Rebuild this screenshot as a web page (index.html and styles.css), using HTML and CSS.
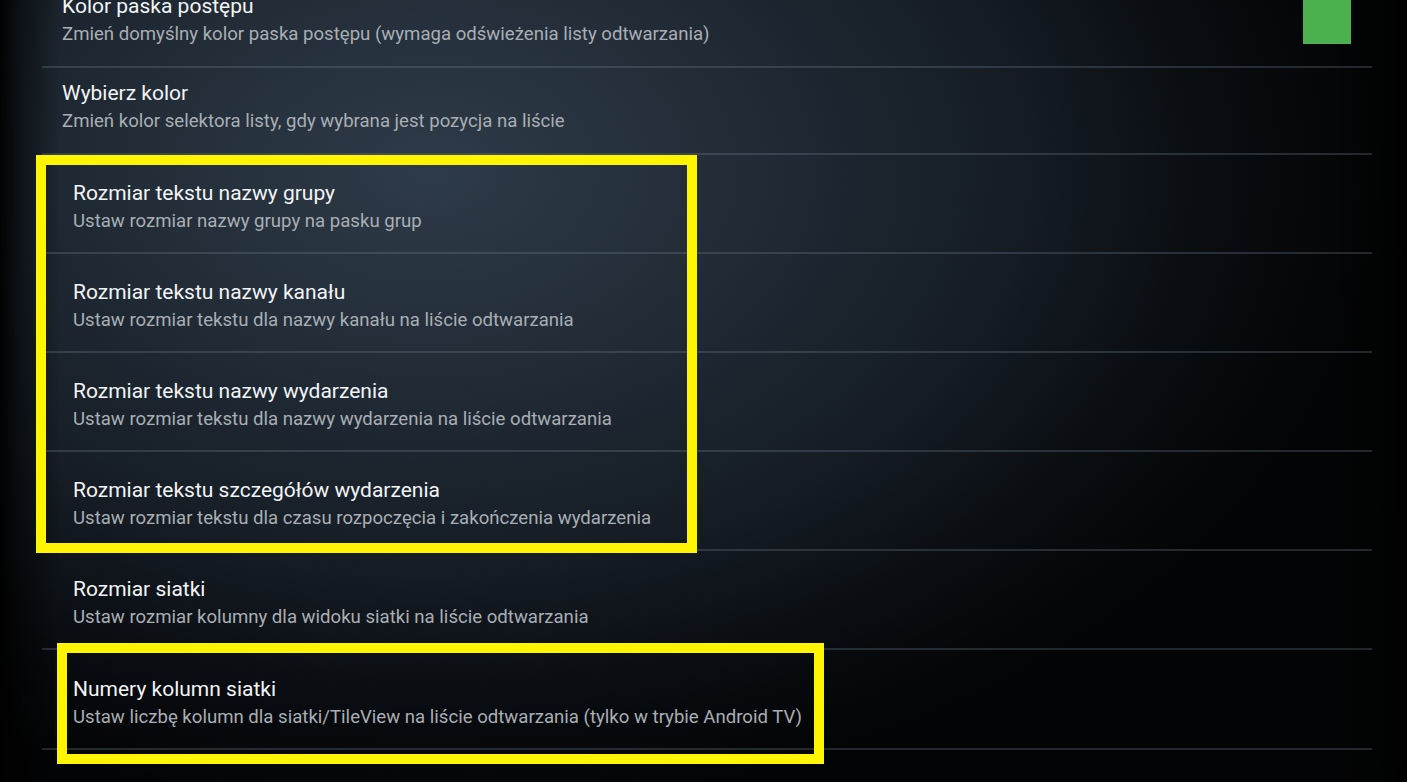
FILE: index.html
```html
<!DOCTYPE html>
<html lang="pl">
<head>
<meta charset="utf-8">
<title>Ustawienia</title>
<link rel="stylesheet" href="styles.css">
</head>
<body>
<div class="screen">
  <div class="list">
    <div class="row row-compact">
      <div class="texts">
        <div class="title">Kolor paska postępu</div>
        <div class="summary">Zmień domyślny kolor paska postępu (wymaga odświeżenia listy odtwarzania)</div>
      </div>
      <div class="swatch"></div>
    </div>
    <div class="row row-compact">
      <div class="texts">
        <div class="title">Wybierz kolor</div>
        <div class="summary">Zmień kolor selektora listy, gdy wybrana jest pozycja na liście</div>
      </div>
    </div>
    <div class="group group-highlight">
      <div class="row">
        <div class="texts">
          <div class="title">Rozmiar tekstu nazwy grupy</div>
          <div class="summary">Ustaw rozmiar nazwy grupy na pasku grup</div>
        </div>
      </div>
      <div class="row">
        <div class="texts">
          <div class="title">Rozmiar tekstu nazwy kanału</div>
          <div class="summary">Ustaw rozmiar tekstu dla nazwy kanału na liście odtwarzania</div>
        </div>
      </div>
      <div class="row">
        <div class="texts">
          <div class="title">Rozmiar tekstu nazwy wydarzenia</div>
          <div class="summary">Ustaw rozmiar tekstu dla nazwy wydarzenia na liście odtwarzania</div>
        </div>
      </div>
      <div class="row">
        <div class="texts">
          <div class="title">Rozmiar tekstu szczegółów wydarzenia</div>
          <div class="summary">Ustaw rozmiar tekstu dla czasu rozpoczęcia i zakończenia wydarzenia</div>
        </div>
      </div>
    </div>
    <div class="row">
      <div class="texts">
        <div class="title">Rozmiar siatki</div>
        <div class="summary">Ustaw rozmiar kolumny dla widoku siatki na liście odtwarzania</div>
      </div>
    </div>
    <div class="row row-highlight">
      <div class="texts">
        <div class="title">Numery kolumn siatki</div>
        <div class="summary">Ustaw liczbę kolumn dla siatki/TileView na liście odtwarzania (tylko w trybie Android TV)</div>
      </div>
    </div>
  </div>
</div>
</body>
</html>
```

FILE: styles.css
```css
html, body {
  margin: 0;
  padding: 0;
  height: 100%;
  overflow: hidden;
}

body {
  font-family: Roboto, "Noto Sans", "Liberation Sans", sans-serif;
  background: #05080b;
}

.screen {
  width: 1407px;
  height: 782px;
  overflow: hidden;
  background:
    linear-gradient(to right, rgba(0,0,0,0.95) 0px, rgba(0,0,0,0.55) 18px, rgba(0,0,0,0) 60px),
    linear-gradient(to left, rgba(0,0,0,0.9) 0px, rgba(0,0,0,0.4) 25px, rgba(0,0,0,0) 80px),
    radial-gradient(ellipse 950px 640px at 430px 170px, #2e3b48 0%, #222d38 30%, #151c24 62%, #080b0f 85%, #030405 100%);
}

.list {
  margin: -19px 0 0 42px;
  width: 1330px;
  display: flex;
  flex-direction: column;
}

.row {
  display: flex;
  align-items: center;
  padding: 24px 21px 17px 31px;
  border-bottom: 2px solid rgba(120, 135, 150, 0.28);
}

.row-compact {
  padding: 11px 21px 18px 20px;
}

.texts {
  flex: 1;
  display: flex;
  flex-direction: column;
}

.title {
  font-size: 21px;
  line-height: 28px;
  color: #f2f4f6;
  white-space: nowrap;
}

.summary {
  font-size: 18.6px;
  line-height: 28px;
  color: #a9aeb4;
  white-space: nowrap;
}

.swatch {
  width: 48px;
  height: 48px;
  background: #4caf50;
  flex: none;
}

.group {
  display: flex;
  flex-direction: column;
}

.group-highlight,
.row-highlight {
  position: relative;
}

.group-highlight::after {
  content: "";
  position: absolute;
  top: 0;
  left: -6px;
  width: 641px;
  height: 378px;
  border: 10px solid #fff500;
  pointer-events: none;
}

.row-highlight {
  margin-top: 1px;
}

.row-highlight::after {
  content: "";
  position: absolute;
  top: -8px;
  left: 15px;
  width: 747px;
  height: 101px;
  border: 10px solid #fff500;
  pointer-events: none;
}
```
